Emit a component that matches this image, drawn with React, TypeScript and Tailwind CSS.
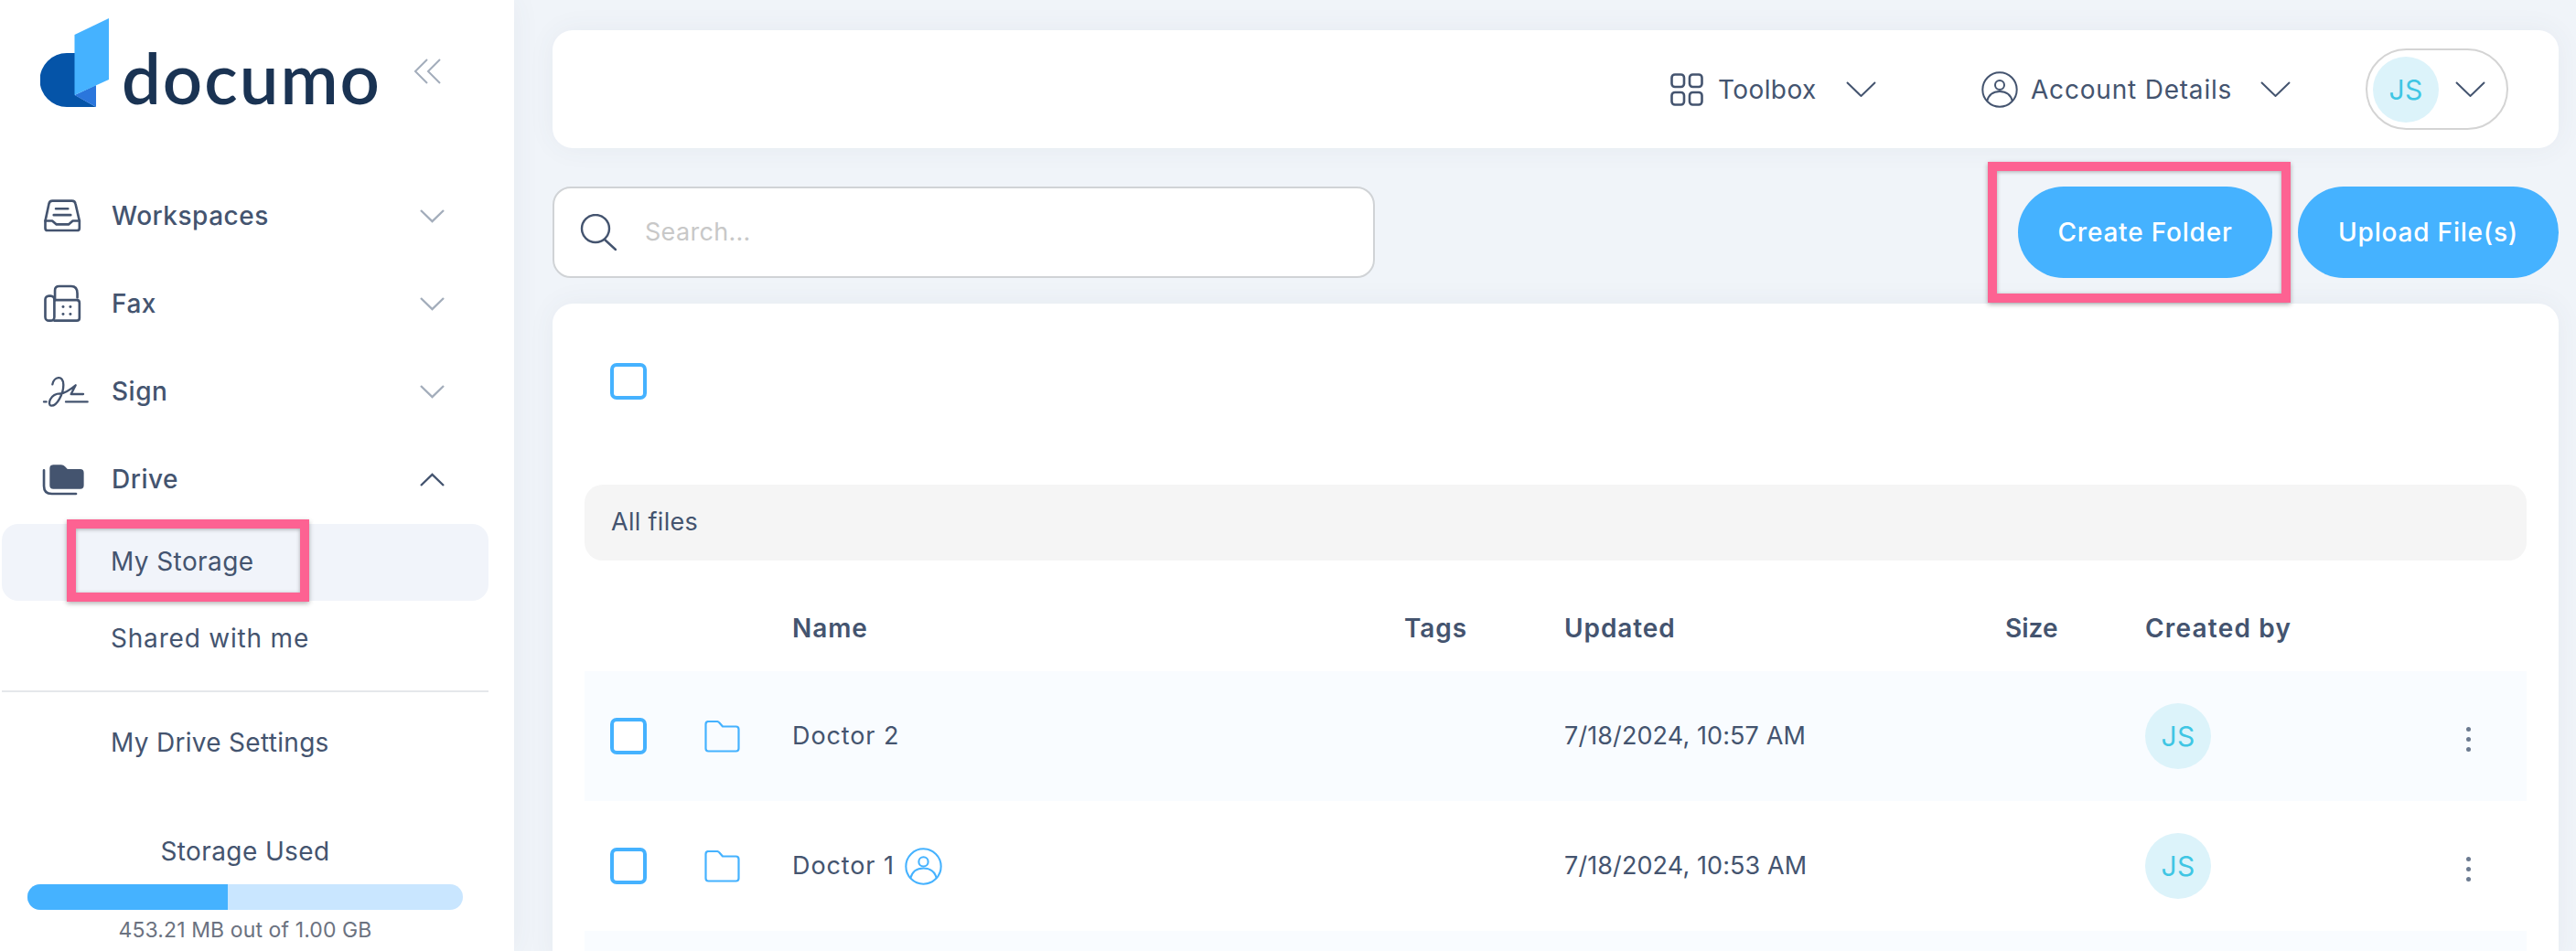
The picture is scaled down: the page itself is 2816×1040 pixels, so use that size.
import React from 'react';

const Chevron = ({ up = false, className = '' }: { up?: boolean; className?: string }) => (
  <svg viewBox="0 0 27 15" fill="none" stroke="currentColor" strokeWidth="2.4" className={className}>
    <path d={up ? 'M1 14 13.5 2 26 14' : 'M1 1 13.5 13 26 1'} />
  </svg>
);

const HeadChevron = () => (
  <svg viewBox="0 0 33 17" fill="none" stroke="currentColor" strokeWidth="2" className="w-[33px] h-[17px] text-[#44546f]">
    <path d="M1 1 16.5 16 32 1" />
  </svg>
);

const Logo = () => (
  <svg viewBox="44 20 75 97" className="w-[75px] h-[97px] shrink-0">
    <path d="M105 117H73a29.500 29.500 0 0 1 0-59h9v46z" fill="#0554a8" />
    <path d="M81.500 104 105 93v24z" fill="#2a76dc" />
    <path d="M81.500 38 119 20v67l-37.500 17z" fill="#45b2ff" />
  </svg>
);

const InboxIcon = () => (
  <svg viewBox="50 50 135 115" fill="none" stroke="currentColor" strokeWidth="8" strokeLinejoin="round" strokeLinecap="round" className="w-[45px] h-[38px]">
    <path d="M60 124 72 68q2-10 12-10h64q10 0 12 10l13 56" />
    <path d="M60 124v24q0 8 8 8h97q8 0 8-8v-24h-22l-14 12h-40l-14-12z" />
    <path d="M95 84h40M88 105h56" />
  </svg>
);

const FaxIcon = () => (
  <svg viewBox="50 332 135 127" fill="none" stroke="currentColor" strokeWidth="8" strokeLinecap="round" strokeLinejoin="round" className="w-[45px] h-[42px]">
    <rect x="60" y="370" width="30" height="82" rx="12" />
    <path d="M92 384h72q9 0 9 9v50q0 9-9 9H90" />
    <path d="M92 384v-32q0-14 14-14h40q20 0 20 24v14" />
    <g fill="currentColor" stroke="none">
      <circle cx="119" cy="406" r="4.500" />
      <circle cx="143" cy="406" r="4.500" />
      <circle cx="119" cy="430" r="4.500" />
      <circle cx="143" cy="430" r="4.500" />
    </g>
  </svg>
);

const SignIcon = () => (
  <svg viewBox="40 626 153 114" fill="none" stroke="currentColor" strokeWidth="7" strokeLinecap="round" strokeLinejoin="round" className="w-[51px] h-[38px]">
    <path d="M46 717h8M118 717h71M74 660c4-24 36-34 36 2 0 30-22 70-40 68-14-2-4-40 30-40 14 0 34-14 50-27l-15 29h40" />
  </svg>
);

const DriveIcon = () => (
  <svg viewBox="48 916 140 106" className="w-[47px] h-[35px]">
    <path d="M84 920h26q8 0 13 6l8 8h42q12 0 12 12v42q0 12-12 12H84q-12 0-12-12v-56q0-12 12-12z" fill="currentColor" />
    <path d="M53 938v52q0 26 26 26h80" fill="none" stroke="currentColor" strokeWidth="8" strokeLinecap="round" />
  </svg>
);

const PersonCircle = ({ className = '', width = 2 }: { className?: string; width?: number }) => (
  <svg viewBox="0 0 40 40" fill="none" stroke="currentColor" strokeWidth={width} className={className}>
    <circle cx="20" cy="20" r="18.700" />
    <circle cx="20" cy="15" r="5" />
    <path d="M6 33c2-8 7-11 14-11s12 3 14 11" />
  </svg>
);

const FolderIcon = () => (
  <svg viewBox="0 0 39 35" fill="none" stroke="#45b2ff" strokeWidth="2.200" strokeLinejoin="round" className="w-[39px] h-[35px] shrink-0">
    <path d="M1.500 4q0-3 3-3h9q2 0 3 1.500L20 6.500h14.500q3 0 3 3v21q0 3-3 3h-30q-3 0-3-3z" />
  </svg>
);

const Checkbox = () => <div className="w-[40px] h-[40px] rounded-[7px] border-[4px] border-[#45b2ff] bg-white" />;

const Avatar = () => (
  <div className="w-[72px] h-[72px] rounded-full bg-[#dcf3fa] flex items-center justify-center text-[#3fc6e4] text-[30px] leading-none">JS</div>
);

const Dots = () => (
  <div className="flex flex-col gap-[6px] items-center mt-[6px]">
    <span className="w-[5px] h-[5px] rounded-full bg-[#6b7a90]" />
    <span className="w-[5px] h-[5px] rounded-full bg-[#6b7a90]" />
    <span className="w-[5px] h-[5px] rounded-full bg-[#6b7a90]" />
  </div>
);

const navItems = [
  { label: 'Workspaces', icon: <InboxIcon /> },
  { label: 'Fax', icon: <FaxIcon /> },
  { label: 'Sign', icon: <SignIcon /> },
];

const Sidebar = () => (
  <aside className="w-[562px] h-[1040px] shrink-0 bg-white flex flex-col relative z-10 shadow-[0_0_30px_rgba(60,80,110,0.06)]">
    <div className="h-[188px] pl-[44px] pt-[20px] flex items-start relative">
      <Logo />
      <span className="ml-[14px] mt-[16px] text-[#1a3353] text-[76px] leading-[97px] font-semibold font-['Lato',sans-serif] tracking-[2px]">documo</span>
      <svg viewBox="0 0 30 28" fill="none" stroke="#a3adbb" strokeWidth="2" className="absolute left-[452px] top-[64px] w-[30px] h-[28px]">
        <path d="M15 1 2 14l13 13M29 1 16 14l13 13" />
      </svg>
    </div>
    <nav className="flex flex-col">
      {navItems.map((item) => (
        <div key={item.label} className="h-[96px] flex items-center pl-[46px] pr-[76px] text-[#44546f]">
          <div className="w-[76px] flex items-center justify-start">{item.icon}</div>
          <span className="text-[28px] font-medium tracking-[0.5px]">{item.label}</span>
          <Chevron className="ml-auto w-[27px] h-[15px] text-[#a3adbb]" />
        </div>
      ))}
      <div className="h-[96px] flex items-center pl-[46px] pr-[76px] text-[#44546f]">
        <div className="w-[76px] flex items-center"><DriveIcon /></div>
        <span className="text-[28px] font-medium tracking-[0.5px]">Drive</span>
        <Chevron up className="ml-auto w-[27px] h-[15px] text-[#44546f]" />
      </div>
    </nav>
    <div className="ml-[2px] w-[532px] text-[#44546f] text-[28px] tracking-[0.4px]">
      <div className="h-[84px] mt-[1px] pl-[119px] pb-[3px] rounded-[18px] bg-[#f1f4fa] flex items-center relative">
        My Storage
        <div className="absolute left-[71px] top-[-5px] w-[265px] h-[90px] border-[10px] border-[#fd6292] shadow-[0_2px_5px_rgba(0,0,0,0.3),inset_0_1px_4px_rgba(0,0,0,0.3)]" />
      </div>
      <div className="h-[82px] pl-[119px] flex items-center tracking-[0.8px]">Shared with me</div>
      <div className="h-[2px] mt-[16px] bg-[#e5e7eb]" />
      <div className="h-[112px] pl-[119px] pb-[3px] flex items-center tracking-[0.3px]">My Drive Settings</div>
    </div>
    <div className="mt-[42px] px-[30px] w-[536px] flex flex-col items-center">
      <div className="text-[#44546f] text-[28px] leading-[40px] tracking-[0.4px]">Storage Used</div>
      <div className="w-full h-[28px] mt-[16px] rounded-full bg-[#c9e6ff] overflow-hidden">
        <div className="w-[219px] h-full bg-[#45b2ff]" />
      </div>
      <div className="mt-[6px] text-[#6b7280] text-[23px] leading-[32px] tracking-[0.1px]">453.21 MB out of 1.00 GB</div>
    </div>
  </aside>
);

const rows = [
  { name: 'Doctor 2', updated: '7/18/2024, 10:57 AM', tint: true, shared: false },
  { name: 'Doctor 1', updated: '7/18/2024, 10:53 AM', tint: false, shared: true },
  { name: '', updated: '', tint: true, shared: false },
];

const gridCols = 'grid grid-cols-[131px_96px_669px_175px_482px_153px_289px_1fr] items-center';

const App = () => (
  <div className="w-[2816px] h-[1040px] overflow-hidden flex bg-[#f0f4f9] font-['Inter',sans-serif]">
    <Sidebar />
    <main className="flex-1 pl-[42px] pr-[19px] pt-[33px] min-w-0">
      <header className="h-[129px] rounded-[22px] bg-white shadow-[0_0_30px_rgba(60,80,110,0.06)] flex items-center text-[#44546f] text-[28px] tracking-[0.4px]">
        <div className="ml-[1222px] flex items-center">
          <svg viewBox="0 0 36 36" fill="none" stroke="currentColor" strokeWidth="2.600" className="w-[36px] h-[36px]">
            <rect x="1.500" y="1.500" width="13.500" height="13.500" rx="3.500" />
            <rect x="21" y="1.500" width="13.500" height="13.500" rx="3.500" />
            <rect x="1.500" y="21" width="13.500" height="13.500" rx="3.500" />
            <rect x="21" y="21" width="13.500" height="13.500" rx="3.500" />
          </svg>
          <span className="ml-[16px] w-[140px]">Toolbox</span>
          <HeadChevron />
        </div>
        <div className="ml-[115px] flex items-center">
          <PersonCircle className="w-[40px] h-[40px]" />
          <span className="ml-[14px] w-[251px] tracking-[0.8px]">Account Details</span>
          <HeadChevron />
        </div>
        <div className="ml-[82px] w-[156px] h-[89px] rounded-full border-2 border-[#d4d4d4] flex items-center pl-[6px]">
          <Avatar />
          <div className="ml-[18px] flex"><HeadChevron /></div>
        </div>
      </header>

      <div className="mt-[42px] h-[100px] flex items-center">
        <div className="w-[899px] h-[100px] rounded-[20px] border-2 border-[#d0d3d6] bg-white flex items-center pl-[28px]">
          <svg viewBox="0 0 40 40" fill="none" stroke="#44546f" strokeWidth="2.400" strokeLinecap="round" className="w-[40px] h-[40px]">
            <circle cx="17" cy="16" r="15" />
            <path d="m27 28 12 11" />
          </svg>
          <span className="ml-[31px] text-[#c8c8c8] text-[27px] tracking-[0.3px]">Search...</span>
        </div>
        <div className="ml-auto relative flex items-center text-white text-[28px] font-medium tracking-[0.8px]">
          <button className="w-[278px] h-[100px] rounded-full bg-[#45b2ff]">Create Folder</button>
          <button className="ml-[28px] w-[285px] h-[100px] rounded-full bg-[#45b2ff]">Upload File(s)</button>
          <div className="absolute left-[-33px] top-[-27px] w-[331px] h-[154px] border-[10px] border-[#fd6292] shadow-[0_2px_5px_rgba(0,0,0,0.3),inset_0_1px_4px_rgba(0,0,0,0.3)]" />
        </div>
      </div>

      <section className="mt-[28px] h-[720px] rounded-t-[22px] bg-white shadow-[0_0_30px_rgba(60,80,110,0.06)] px-[35px] text-[#44546f] text-[27px] tracking-[0.3px]">
        <div className="h-[198px] pt-[65px] pl-[28px]">
          <Checkbox />
        </div>
        <div className="h-[83px] rounded-[20px] bg-[#f5f5f5] flex items-center pl-[29px]">All files</div>
        <div className={`${gridCols} h-[121px] pt-[27px] text-[28px] font-semibold tracking-[0.9px]`}>
          <span />
          <span />
          <span>Name</span>
          <span>Tags</span>
          <span>Updated</span>
          <span className="tracking-[0px]">Size</span>
          <span className="tracking-[1.2px]">Created by</span>
          <span />
        </div>
        {rows.map((row, i) => (
          <div key={i} className={`${gridCols} h-[142px] ${row.tint ? 'bg-[#f9fcff]' : 'bg-white'}`}>
            {row.name ? (
              <>
                <div className="pl-[28px]"><Checkbox /></div>
                <FolderIcon />
                <div className="flex items-center gap-[11px]">
                  <span className="tracking-[0.9px]">{row.name}</span>
                  {row.shared && <PersonCircle className="w-[41px] h-[41px] text-[#45b2ff]" />}
                </div>
                <span />
                <span className="tracking-[0.1px]">{row.updated}</span>
                <span />
                <Avatar />
                <Dots />
              </>
            ) : null}
          </div>
        ))}
      </section>
    </main>
  </div>
);

export default App;
